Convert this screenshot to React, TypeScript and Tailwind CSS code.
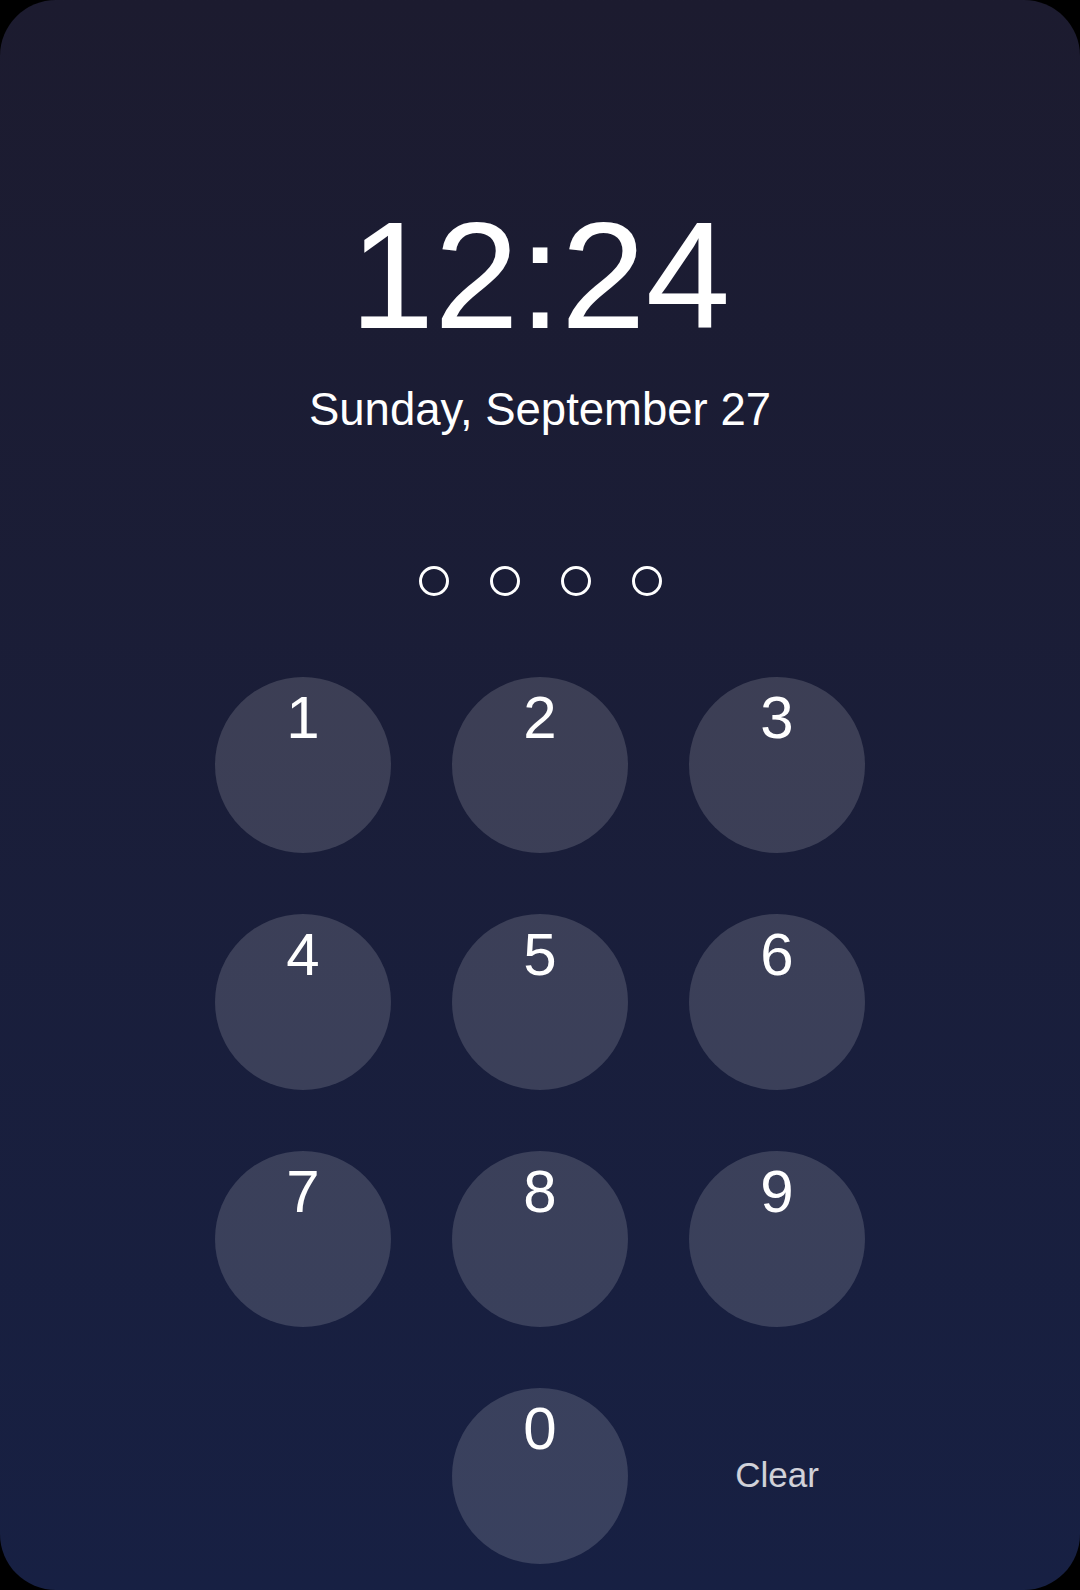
import { useState } from 'react';

const keys = ['1', '2', '3', '4', '5', '6', '7', '8', '9'];

export default function App() {
  const [pin, setPin] = useState('');

  const press = (k: string) => {
    if (pin.length < 4) setPin(pin + k);
  };

  return (
    <div className="w-[1080px] h-[1590px] bg-black" style={{ fontFamily: '"Liberation Sans", Arial, sans-serif' }}>
      <div className="w-full h-full rounded-[56px] bg-gradient-to-b from-[#1c1b2f] to-[#172043] flex flex-col items-center text-white overflow-hidden">
        <div className="mt-[199px] text-[152px] leading-none">12:24</div>
        <div className="mt-[36px] text-[45.5px] leading-none">Sunday, September 27</div>

        <div className="mt-[133px] flex gap-[41px]">
          {[0, 1, 2, 3].map(i => (
            <div
              key={i}
              className={`w-[30px] h-[30px] rounded-full border-[3px] border-white ${i < pin.length ? 'bg-white' : ''}`}
            />
          ))}
        </div>

        <div className="mt-[81px] grid grid-cols-[176px_176px_176px] gap-x-[61px] gap-y-[61px]">
          {keys.map(k => (
            <button
              key={k}
              type="button"
              onClick={() => press(k)}
              className="w-[176px] h-[176px] rounded-full bg-white/15 flex flex-col items-center pt-[11px] text-6xl leading-none text-white"
            >
              {k}
            </button>
          ))}
          <div />
          <button
            type="button"
            onClick={() => press('0')}
            className="w-[176px] h-[176px] rounded-full bg-white/15 flex flex-col items-center pt-[11px] text-6xl leading-none text-white"
          >
            0
          </button>
          <button
            type="button"
            onClick={() => setPin('')}
            className="w-[176px] h-[176px] flex items-center justify-center text-[35px] text-white/80"
          >
            Clear
          </button>
        </div>
      </div>
    </div>
  );
}
